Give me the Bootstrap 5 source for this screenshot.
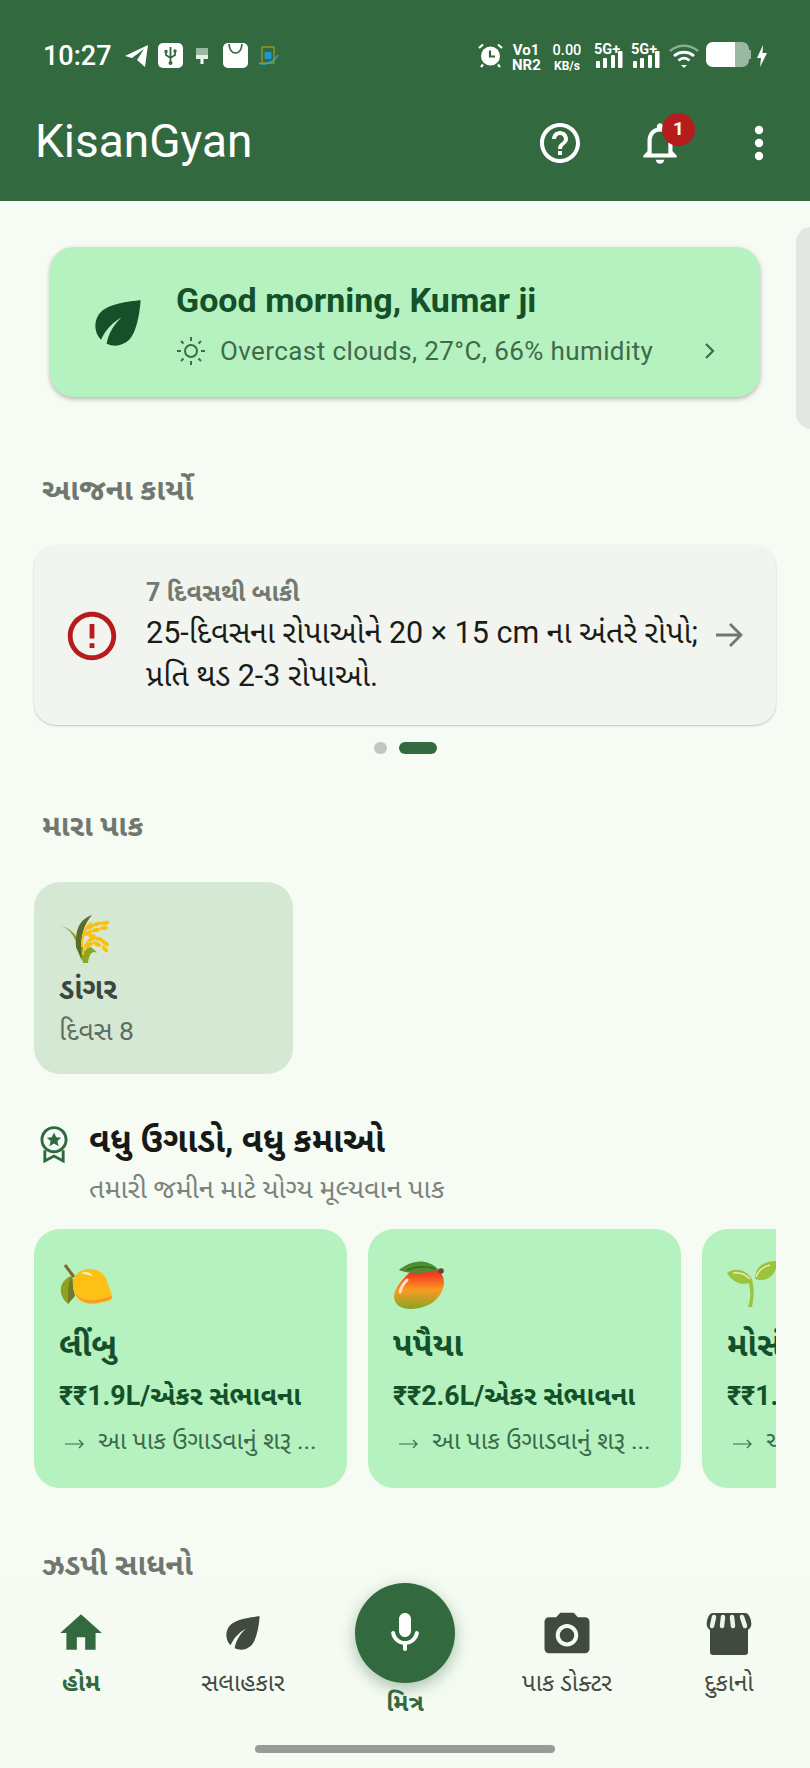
<!DOCTYPE html>
<html lang="gu"><head><meta charset="utf-8"><title>KisanGyan</title>
<link href="https://cdn.jsdelivr.net/npm/bootstrap@5.3.0/dist/css/bootstrap.min.css" rel="stylesheet">
<style>
html,body{margin:0;background:#f6fbf4}
body{font-family:Roboto,"Noto Sans Gujarati","Noto Sans",sans-serif;color:#1a1c19}
.phone{width:810px;height:1768px;overflow:hidden;position:relative;background:#f6fbf4}
.top{background:#33693f;height:201px;color:#fff}
.stat{height:100px;padding:42px 43px 0 43px}
.stime{font-size:27px;font-weight:500;line-height:28px;width:70px;margin-right:12px;white-space:nowrap}
.gl{display:block;flex:none}
.net2{font-size:15px;font-weight:700;line-height:15px;text-align:center;margin-top:1px}
.appbar{height:86px;padding:0 35px 0 35px}
.brand{font-size:46px;line-height:46px;margin-top:-4px}
.act{width:48px;height:48px;display:flex;align-items:center;justify-content:center;position:relative}
.notif{position:absolute;top:-6px;right:-11px;width:33px;height:33px;border-radius:50%;background:#b71c1c;font-size:19px;font-weight:700;color:#fff;display:flex;align-items:center;justify-content:center}
.hello{margin:46px 0 0 50px;width:710px;height:150px;background:#b5f2bf;border-radius:24px;box-shadow:0 2px 5px rgba(0,0,0,.28);padding:2px 43px 0 40px}
.hello h1{font-size:34px;font-weight:700;color:#14502a;line-height:38px;margin:0 0 17px}
.wx{font-size:26px;color:#3f6a4b;line-height:30px;letter-spacing:.4px}
.peek{position:absolute;left:796px;top:227px;width:30px;height:202px;background:#e3e6e1;border-radius:20px}
.sect{font-size:30px;font-weight:700;color:#6f7770;line-height:30px;margin-left:42px}
.task{margin:0 34px;height:180px;background:#f2f5ef;border-radius:22px;box-shadow:0 1px 2px rgba(0,0,0,.22);padding:4px 33px 0 32px}
.due{font-size:25px;font-weight:700;color:#727972;line-height:30px}
.todo{font-size:30.5px;line-height:43px;color:#1a1c19;width:562px;margin-top:3px}
.dot{width:13px;height:12px;border-radius:7px;background:#c2c8c1}
.dot.on{width:38px;background:#33693f}
.crop{margin-left:34px;width:259px;height:192px;background:#d4e8d4;border-radius:26px;padding:33px 0 0 25px}
.cname{font-size:29px;font-weight:700;color:#39473c;line-height:38px;margin-top:5px}
.cday{font-size:26.500px;color:#5f6c62;line-height:36px;margin-top:5px}
.grow{font-size:34px;font-weight:700;color:#161a17;line-height:38px}
.gsub{font-size:27px;color:#7b837c;line-height:32px;margin-top:14px;white-space:nowrap}
.rail{margin-left:34px;width:742px;overflow:hidden;gap:21px}
.pick{flex:none;width:313px;height:259px;background:#b5f2bf;border-radius:26px;padding:34px 0 0 25px;overflow:hidden}
.pname{font-size:32.500px;font-weight:700;color:#14502a;line-height:38px;margin-top:17px;white-space:nowrap}
.pval{font-size:26.800px;font-weight:700;color:#14502a;line-height:34px;margin-top:15px;white-space:nowrap}
.pgo{font-size:24.800px;color:#3c6a4b;line-height:30px;margin-top:13px;white-space:nowrap}
.pgo svg{margin:6px 13px 0 6px;flex:none}
.btm{position:absolute;left:0;right:0;top:1576px;height:192px;background:#f5fbf3;padding-top:8px}
.tab{position:absolute;width:162px;text-align:center;font-size:24px;color:#424940;line-height:28px;white-space:nowrap}
.tab svg{display:block;margin:0 auto 11px}
.tab.cur{color:#33693f;font-weight:700}
.tab .mic svg{margin:0}
.mic{width:100px;height:100px;border-radius:50%;background:#33693f;box-shadow:0 5px 16px rgba(51,105,63,.4);display:flex;align-items:center;justify-content:center;margin:0 auto}
.bar{position:absolute;left:255px;top:1745px;width:300px;height:8px;border-radius:4px;background:#999b98}
</style></head>
<body>
<div class="phone">
<header class="top">
  <div class="stat d-flex align-items-start">
    <div class="stime">10:27</div>
    <svg class="gl" width="23" height="24" viewBox="0 0 23 24" style="margin-top:1px"><path d="M0 13 23 2 20 24 12 17 19 6 7 15z" fill="#fff"/></svg>
    <svg class="gl" width="25" height="25" viewBox="0 0 25 25" style="margin:1px 0 0 10px"><rect width="25" height="25" rx="5" fill="#fff"/><path d="M12.5 4v17M8 9v3l4.5 3 4.5-3V9" stroke="#33693f" stroke-width="1.8" fill="none"/><circle cx="12.5" cy="20" r="2" fill="#33693f"/><rect x="6.5" y="7" width="3" height="3" fill="#33693f"/><circle cx="17" cy="8" r="1.7" fill="#33693f"/></svg>
    <svg class="gl" width="12" height="16" viewBox="0 0 12 16" style="margin:6px 0 0 13px"><rect width="12" height="7" fill="#9ab8a2"/><rect y="7" width="12" height="4" fill="#e6efe8"/><rect x="4.5" y="11" width="3" height="5" fill="#fff"/></svg>
    <svg class="gl" width="25" height="25" viewBox="0 0 25 25" style="margin:1px 0 0 15px"><rect width="25" height="25" rx="5" fill="#fff"/><path d="M6 1c.5 6 3 9 6.500 9S18.500 7 19 1" stroke="#33693f" stroke-width="1.700" fill="none"/></svg>
    <svg class="gl" width="21" height="21" viewBox="0 0 21 21" style="margin:4px 0 0 10px"><rect x="4" y="1" width="12" height="16" fill="none" stroke="#c0a920" stroke-width="1"/><rect x="6.500" y="6" width="7" height="7" rx="1" fill="#2196c9"/><path d="M1 17c6 3 15-1 19-8" stroke="#2aa8dc" stroke-width="1.500" fill="none"/></svg>
    <div class="ms-auto d-flex align-items-start">
      <svg class="gl" width="25" height="26" viewBox="0 0 25 26"><circle cx="12.500" cy="14" r="9.500" fill="#fff"/><path d="M12 8.500v6h5" stroke="#33693f" stroke-width="2.200" fill="none"/><path d="M1 6 5 2.500M24 6l-4-3.500M3 25l2-2.500M22 25l-2-2.500" stroke="#fff" stroke-width="2.200"/></svg>
      <div class="net2" style="width:28px;margin-left:9px">Vo1<br>NR2</div>
      <div class="net2" style="width:30px;margin-left:12px"><span style="font-size:14.500px;font-weight:500">0.00</span><br><span style="font-size:12px">KB/s</span></div>
      <svg class="gl" width="30" height="26" viewBox="0 0 30 26" style="margin-left:12px"><text x="0" y="12" font-size="14.500" font-weight="700" fill="#fff" font-family="Roboto">5G+</text><g fill="#fff"><rect x="2" y="19" width="4" height="7" rx="1"/><rect x="9" y="16" width="4" height="10" rx="1"/><rect x="17" y="13" width="4" height="13" rx="1"/><rect x="24" y="9" width="4.500" height="17" rx="1"/></g></svg>
      <svg class="gl" width="30" height="26" viewBox="0 0 30 26" style="margin-left:7px"><text x="0" y="12" font-size="14.500" font-weight="700" fill="#fff" font-family="Roboto">5G+</text><g fill="#fff"><rect x="2" y="19" width="4" height="7" rx="1"/><rect x="9" y="16" width="4" height="10" rx="1"/><rect x="17" y="13" width="4" height="13" rx="1"/><rect x="24" y="9" width="4.500" height="17" rx="1"/></g></svg>
      <svg class="gl" width="30" height="25" viewBox="0 0 30 25" style="margin-left:8px;margin-top:1px"><path d="M1 8C9 1 21 1 29 8" stroke="#89ad93" stroke-width="2.500" fill="none"/><path d="M5 13c6-5 14-5 20 0M9.500 17.500c3.500-3 7.500-3 11 0" stroke="#fff" stroke-width="2.800" fill="none"/><path d="M12 22h6l-3 3z" fill="#fff"/></svg>
      <svg class="gl" width="45" height="26" viewBox="0 0 45 26" style="margin-left:7px"><rect width="43" height="25" rx="7" fill="#9ab8a2"/><path d="M7 0h22v25H7a7 7 0 0 1-7-7V7a7 7 0 0 1 7-7z" fill="#fff"/><rect x="43" y="8" width="2" height="9" fill="#9ab8a2"/></svg>
      <svg class="gl" width="10" height="22" viewBox="0 0 10 22" style="margin:3px 0 0 6px"><path d="M6 0 0 13h4L3 22l7-14H5.500z" fill="#fff"/></svg>
    </div>
  </div>
  <div class="appbar d-flex align-items-center">
    <div class="brand">KisanGyan</div>
    <div class="act ms-auto" style="margin-right:52px"><svg width="50" height="50" viewBox="0 0 24 24" fill="#fff"><path d="M11 18h2v-2h-2v2zm1-16C6.480 2 2 6.480 2 12s4.480 10 10 10 10-4.480 10-10S17.520 2 12 2zm0 18c-4.410 0-8-3.590-8-8s3.590-8 8-8 8 3.590 8 8-3.590 8-8 8zm0-14c-2.210 0-4 1.790-4 4h2c0-1.100.900-2 2-2s2 .900 2 2c0 2-3 1.750-3 5h2c0-2.250 3-2.500 3-5 0-2.210-1.790-4-4-4z"/></svg></div>
    <div class="act" style="margin-right:69px"><svg width="50" height="52" viewBox="0 0 24 24" fill="#fff" class="gl"><path d="M12 22c1.100 0 2-.900 2-2h-4c0 1.100.900 2 2 2zm6-6v-5c0-3.070-1.630-5.640-4.500-6.320V4c0-.830-.670-1.500-1.500-1.500s-1.500.670-1.500 1.500v.680C7.640 5.360 6 7.920 6 11v5l-2 2v1h16v-1l-2-2zm-2 1H8v-6c0-2.480 1.510-4.500 4-4.500s4 2.020 4 4.500v6z"/></svg><span class="notif">1</span></div>
    <svg width="12" height="38" viewBox="0 0 12 38" fill="#fff" style="margin-right:10px"><circle cx="6" cy="6" r="4.200"/><circle cx="6" cy="19" r="4.200"/><circle cx="6" cy="32" r="4.200"/></svg>
  </div>
</header>

<main>
  <div class="hello d-flex align-items-center">
    <svg width="68" height="68" viewBox="0 0 24 24" fill="#14502a" style="flex:none;margin-right:24px;margin-left:-6px"><path d="M6.050 8.050c-2.730 2.730-2.730 7.150-.020 9.880 1.470-3.400 4.090-6.240 7.360-7.930-2.770 2.340-4.710 5.610-5.390 9.320 2.600 1.230 5.800.780 7.950-1.370C19.430 14.470 20 4 20 4S9.530 4.570 6.050 8.050z"/></svg>
    <div class="flex-grow-1">
      <h1>Good morning, Kumar ji</h1>
      <div class="wx d-flex align-items-center">
        <svg width="30" height="30" viewBox="0 0 30 30" fill="none" stroke="#3f6a4b" stroke-width="2" style="margin-right:14px"><circle cx="15" cy="15" r="6"/><path d="M15 1v4M15 25v4M1 15h4M25 15h4M5 5l2.500 2.500M22.500 22.500 25 25M5 25l2.500-2.500M22.500 7.500 25 5"/></svg>
        <span>Overcast clouds, 27°C, 66% humidity</span>
        <svg class="ms-auto" width="14" height="18" viewBox="0 0 14 18" fill="none" stroke="#3f6a4b" stroke-width="2.200"><path d="M3 2l7 7-7 7"/></svg>
      </div>
    </div>
  </div>
  <div class="peek"></div>

  <div class="sect" style="margin-top:78px">આજના કાર્યો</div>
  <div class="task d-flex align-items-center" style="margin-top:40px">
    <svg width="58" height="58" viewBox="0 0 24 24" fill="#b71c1c" style="flex:none;margin-right:25px;margin-left:-3px;margin-top:-2px"><path d="M11 15h2v2h-2zm0-8h2v6h-2zm.990-5C6.470 2 2 6.480 2 12s4.470 10 9.990 10C17.520 22 22 17.520 22 12S17.520 2 11.990 2zM12 20c-4.420 0-8-3.580-8-8s3.580-8 8-8 8 3.580 8 8-3.580 8-8 8z"/></svg>
    <div>
      <div class="due">7 દિવસથી બાકી</div>
      <div class="todo">25-દિવસના રોપાઓને 20 × 15 cm ના અંતરે રોપો; પ્રતિ થડ 2-3 રોપાઓ.</div>
    </div>
    <svg class="ms-auto" width="28" height="26" viewBox="0 0 28 26" fill="none" stroke="#6f7770" stroke-width="2.800" style="margin-top:-4px;flex:none"><path d="M1 13h25M15 2l11 11-11 11"/></svg>
  </div>
  <div class="d-flex justify-content-center" style="gap:12px;margin-top:17px"><span class="dot"></span><span class="dot on"></span></div>

  <div class="sect" style="margin-top:57px">મારા પાક</div>
  <div class="crop" style="margin-top:41px">
    <svg width="52" height="50" viewBox="0 0 52 50" class="gl"><path d="M2 11c10 2 16 14 22 36 2-2 4-3 5-3C22 26 14 13 2 11z" fill="#8da61c"/><path d="M33 0C22 4 16 12 17 32l6 14c-2-22 0-34 10-46z" fill="#5b6e28"/><path d="M24 48c0-14 6-22 14-10-4-3-8 0-9 10z" fill="#8da61c"/><path d="M23 32c0-12 4-22 10-24M24 40c0-8 4-14 10-17" stroke="#fbbf10" stroke-width="2" fill="none"/><g fill="#fbbf10"><ellipse cx="31" cy="12" rx="4.500" ry="2" transform="rotate(-25 31 12)"/><ellipse cx="38" cy="9" rx="4.500" ry="2" transform="rotate(-20 38 9)"/><ellipse cx="46" cy="8" rx="4.500" ry="2" transform="rotate(-10 46 8)"/><ellipse cx="29" cy="18" rx="4.500" ry="2" transform="rotate(-30 29 18)"/><ellipse cx="37" cy="15" rx="4.500" ry="2" transform="rotate(-15 37 15)"/><ellipse cx="45" cy="13" rx="4" ry="2"/><ellipse cx="33" cy="21" rx="3.500" ry="2"/><ellipse cx="33" cy="24" rx="4.500" ry="2" transform="rotate(-25 33 24)"/><ellipse cx="40" cy="24" rx="4.500" ry="2" transform="rotate(15 40 24)"/><ellipse cx="46" cy="28" rx="4.500" ry="2" transform="rotate(35 46 28)"/><ellipse cx="30" cy="30" rx="4.500" ry="2" transform="rotate(-30 30 30)"/><ellipse cx="38" cy="29" rx="4.500" ry="2" transform="rotate(30 38 29)"/><ellipse cx="46" cy="34" rx="4" ry="2" transform="rotate(50 46 34)"/></g></svg>
    <div class="cname">ડાંગર</div>
    <div class="cday">દિવસ 8</div>
  </div>

  <div class="d-flex align-items-start" style="margin:47px 0 0 40px">
    <svg width="28" height="37" viewBox="0 0 29 38" fill="none" stroke="#2d6a3e" stroke-width="3" class="gl" style="margin-top:5px"><circle cx="14.500" cy="14" r="12.500"/><path d="M5 25v11l9.500-5 9.500 5V25"/><path d="M14.500 6.500l2.300 5 5.200.5-4 3.500 1.200 5.300-4.700-2.800-4.700 2.800 1.200-5.300-4-3.500 5.200-.5z" fill="#2d6a3e" stroke="none"/></svg>
    <div style="margin-left:21px">
      <div class="grow">વધુ ઉગાડો, વધુ કમાઓ</div>
      <div class="gsub">તમારી જમીન માટે યોગ્ય મૂલ્યવાન પાક</div>
    </div>
  </div>

  <div class="rail d-flex" style="margin-top:24px">
    <div class="pick">
      <svg width="54" height="46" viewBox="0 0 54 46" class="gl"><path d="M6 2l9 12" stroke="#7c6c2b" stroke-width="3"/><path d="M12 13C2 17-2 28 6 38l3 3 7-22z" fill="#8f9f22"/><path d="M12 13c-3 8-3 18-3 28l7-8z" fill="#6d7a2e"/><path d="M14 22C14 10 24 5 33 6c9 1 14 7 16 15 1 5 4 9 4 13 0 3-3 4-7 5-4 .5-7 2-13 2C21 41 14 33 14 22z" fill="#fdc014"/><path d="M16 30c5 6 13 8 20 7 6-1 11-2 17-4 0 3-3 4-7 5-4 .5-7 2-13 2-8 0-14-4-17-10z" fill="#f9982c"/><path d="M22 10c4-2 9-1 12 3-5-1-8-2-12-3z" fill="#fff3cc"/></svg>
      <div class="pname">લીંબુ</div>
      <div class="pval">₹₹1.9L/એકર સંભાવના</div>
      <div class="pgo d-flex align-items-center"><svg width="20" height="10" viewBox="0 0 20 10" fill="none" stroke="#3c6a4b" stroke-width="1.200"><path d="M0 5h18M14 1l4 4-4 4"/></svg>આ પાક ઉગાડવાનું શરૂ ...</div>
    </div>
    <div class="pick">
      <svg width="54" height="50" viewBox="0 0 54 50" class="gl" style="margin-top:-4px"><defs><linearGradient id="mg" x1="0" y1="0" x2="0" y2="1"><stop offset="0" stop-color="#f33b20"/><stop offset=".18" stop-color="#f33b20"/><stop offset=".55" stop-color="#fb9a22"/><stop offset="1" stop-color="#86a528"/></linearGradient></defs><path d="M16 14C26 4 46 6 50 18c4 12-6 28-24 31C12 52 2 48 1 38c0-8 7-16 15-24z" fill="url(#mg)"/><path d="M14 21c-3 3-6 7-7 12" stroke="#ffe6c8" stroke-width="3" fill="none" stroke-linecap="round"/><path d="M6 11C16 3 32-3 46 11c-8 2-14 3-22 3C16 14 10 13 6 11z" fill="#4f8d2e"/><path d="M14 11c8-3 18-5 28-1" stroke="#35692a" stroke-width="1.500" fill="none"/><circle cx="48" cy="12" r="2.800" fill="#6b4030"/></svg>
      <div class="pname">પપૈયા</div>
      <div class="pval">₹₹2.6L/એકર સંભાવના</div>
      <div class="pgo d-flex align-items-center"><svg width="20" height="10" viewBox="0 0 20 10" fill="none" stroke="#3c6a4b" stroke-width="1.200"><path d="M0 5h18M14 1l4 4-4 4"/></svg>આ પાક ઉગાડવાનું શરૂ ...</div>
    </div>
    <div class="pick">
      <svg width="50" height="50" viewBox="0 0 50 50" class="gl" style="margin-top:-4px"><path d="M0 14c8-6 20-4 26 8-10 6-20 2-26-8zM28 20C28 8 36 2 50 2c0 14-10 22-22 18z" fill="#9bc43c"/><path d="M24 20c4 8 3 18 1 28h-4c3-8 3-18 0-26z" fill="#9bc43c"/><path d="M6 14c6-1 12 1 17 6M29 18c2-6 6-10 14-12" stroke="#efe6b8" stroke-width="1.500" fill="none"/></svg>
      <div class="pname">મોસંબી</div>
      <div class="pval">₹₹1.8L/એકર સંભાવના</div>
      <div class="pgo d-flex align-items-center"><svg width="20" height="10" viewBox="0 0 20 10" fill="none" stroke="#3c6a4b" stroke-width="1.200"><path d="M0 5h18M14 1l4 4-4 4"/></svg>આ પાક ઉગાડવાનું શરૂ ...</div>
    </div>
  </div>
  <div class="sect" style="margin-top:62px">ઝડપી સાધનો</div>
</main>

<nav class="btm">
  <div class="tab cur" style="left:0;top:32px"><svg width="50" height="50" viewBox="0 0 24 24" fill="#33693f"><path d="M10 20v-6h4v6h5v-8h3L12 3 2 12h3v8z"/></svg>હોમ</div>
  <div class="tab" style="left:162px;top:32px"><svg width="50" height="50" viewBox="0 0 24 24" fill="#414a3e"><path d="M6.050 8.050c-2.730 2.730-2.730 7.150-.020 9.880 1.470-3.400 4.090-6.240 7.360-7.930-2.770 2.340-4.710 5.610-5.390 9.320 2.600 1.230 5.800.780 7.950-1.370C19.430 14.470 20 4 20 4S9.530 4.570 6.050 8.050z"/></svg>સલાહકાર</div>
  <div class="tab cur" style="left:324px;top:7px"><div class="mic"><svg width="48" height="48" viewBox="0 0 24 24" fill="#fff"><path d="M12 14c1.660 0 3-1.340 3-3V5c0-1.660-1.340-3-3-3S9 3.340 9 5v6c0 1.660 1.340 3 3 3zm5.910-3c-.490 0-.900.360-.980.850C16.520 14.200 14.470 16 12 16s-4.520-1.800-4.930-4.150c-.080-.490-.490-.850-.980-.850-.610 0-1.090.540-1 1.140.490 3 2.890 5.350 5.910 5.780V20c0 .550.450 1 1 1s1-.450 1-1v-2.080c3.020-.430 5.420-2.780 5.910-5.780.100-.600-.390-1.140-1-1.140z"/></svg></div><div style="margin-top:6px">મિત્ર</div></div>
  <div class="tab" style="left:486px;top:32px"><svg width="54" height="50" viewBox="0 0 24 22" fill="#414a3e"><circle cx="12" cy="12" r="3.200"/><path d="M9 2 7.170 4H4c-1.100 0-2 .900-2 2v12c0 1.100.900 2 2 2h16c1.100 0 2-.900 2-2V6c0-1.100-.900-2-2-2h-3.170L15 2H9zm3 15c-2.760 0-5-2.240-5-5s2.240-5 5-5 5 2.240 5 5-2.240 5-5 5z"/></svg>પાક ડોક્ટર</div>
  <div class="tab" style="left:648px;top:32px"><svg width="46" height="50" viewBox="0 0 46 50"><path d="M7 5h32c3 0 5 3 6 8 1 4 0 7-3 9v22c0 2-1 3-3 3H7c-2 0-3-1-3-3V22c-3-2-4-5-3-9 1-5 3-8 6-8z" fill="#414a3e"/><path d="M8 9l-2 9M17 9l-1 9M26 9l1 9M36 9l3 9" stroke="#eef3ec" stroke-width="4.500" stroke-linecap="round"/></svg>દુકાનો</div>
</nav>
<div class="bar"></div>
</div>
</body></html>
